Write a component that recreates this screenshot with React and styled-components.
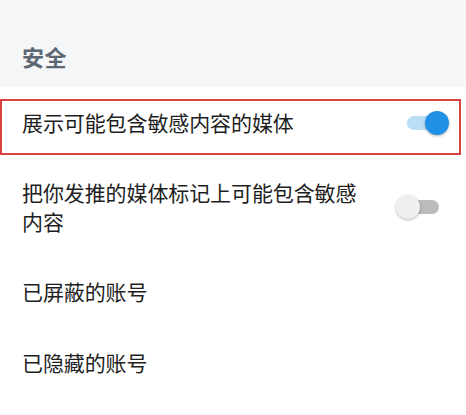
import React, { useState } from "react";
import styled, { createGlobalStyle } from "styled-components";

const GlobalStyle = createGlobalStyle`
	html, body {
		margin: 0;
		padding: 0;
		background: #ffffff;
	}
	body {
		font-family: "Noto Sans CJK SC", "Noto Sans", sans-serif;
	}
`;

const Page = styled.div`
	width: 466px;
	height: 415px;
	overflow: hidden;
	background: #ffffff;
	display: flex;
	flex-direction: column;
`;

const SectionHeader = styled.div`
	height: 87px;
	display: flex;
	align-items: center;
	padding: 24px 22px 0;
	box-sizing: border-box;
	background: #f5f6f8;
	color: #5d6873;
	font-size: 22px;
	font-weight: 700;
	letter-spacing: 0.5px;
`;

const List = styled.div`
	display: flex;
	flex-direction: column;
`;

const Row = styled.div`
	position: relative;
	display: flex;
	align-items: center;
	justify-content: space-between;
	gap: 12px;
	padding: ${(props) => props.$pad || "21px"} 17px ${(props) => props.$pad || "21px"} 22px;

	${(props) =>
		props.$highlight &&
		`
		&::after {
			content: "";
			position: absolute;
			top: 12px;
			bottom: 3px;
			left: 0;
			right: 5px;
			border: 2px solid #d8413d;
			pointer-events: none;
		}
	`}
`;

const Label = styled.div`
	max-width: 345px;
	font-size: 21px;
	line-height: 29px;
	color: #1e1e1e;
	letter-spacing: -0.1px;
`;

const SwitchBox = styled.button`
	position: relative;
	flex: none;
	width: 53px;
	height: 26px;
	padding: 0;
	border: none;
	background: transparent;
	cursor: pointer;
`;

const Track = styled.span`
	position: absolute;
	left: 11px;
	right: 10px;
	top: 6px;
	height: 14px;
	border-radius: 7px;
	background: ${(props) => (props.$on ? "#b9def6" : "#bcbcbc")};
`;

const Knob = styled.span`
	position: absolute;
	top: 1px;
	left: ${(props) => (props.$on ? "29px" : "0px")};
	width: 24px;
	height: 24px;
	border-radius: 50%;
	background: ${(props) => (props.$on ? "#1f90e3" : "#efefef")};
	box-shadow: 0 1px 3px rgba(0, 0, 0, 0.28);
`;

const Switch = ({ on, onToggle }) => (
	<SwitchBox onClick={onToggle} aria-pressed={on}>
		<Track $on={on} />
		<Knob $on={on} />
	</SwitchBox>
);

const App = () => {
	const [showSensitive, setShowSensitive] = useState(true);
	const [markSensitive, setMarkSensitive] = useState(false);

	return (
		<Page>
			<GlobalStyle />
			<SectionHeader>安全</SectionHeader>
			<List>
				<Row $highlight>
					<Label>展示可能包含敏感内容的媒体</Label>
					<Switch on={showSensitive} onToggle={() => setShowSensitive(!showSensitive)} />
				</Row>
				<Row $pad="20px">
					<Label>把你发推的媒体标记上可能包含敏感内容</Label>
					<Switch on={markSensitive} onToggle={() => setMarkSensitive(!markSensitive)} />
				</Row>
				<Row>
					<Label>已屏蔽的账号</Label>
				</Row>
				<Row>
					<Label>已隐藏的账号</Label>
				</Row>
			</List>
		</Page>
	);
};

export default App;
